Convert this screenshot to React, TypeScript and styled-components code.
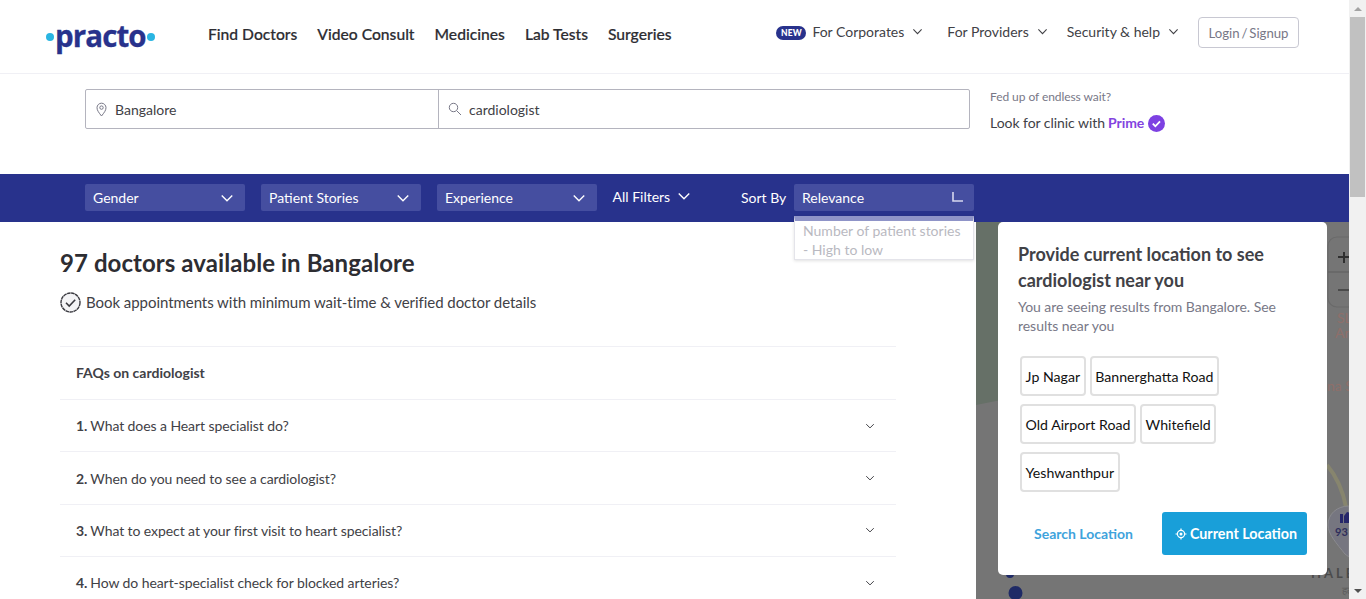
import React from "react";
import styled, { createGlobalStyle } from "styled-components";

const Global = createGlobalStyle`
  html, body { margin: 0; padding: 0; height: 599px; overflow: hidden; background: #fff; }
  body { font-family: Lato, "Liberation Sans", sans-serif; color: #414146; }
  * { box-sizing: border-box; }
`;

const Shell = styled.div`display: flex; width: 1366px; height: 599px; overflow: hidden;`;
const Page = styled.div`width: 1349px; height: 599px; display: flex; flex-direction: column; flex: none; position: relative;`;

const ScrollTrack = styled.div`width: 17px; background: #f1f1f1; display: flex; flex-direction: column; align-items: center; flex: none;`;
const ScrollArrow = styled.div`
  height: 17px; width: 17px; display: flex; align-items: center; justify-content: center;
  &::after { content: ""; border-left: 4px solid transparent; border-right: 4px solid transparent;
    ${(p: { $down?: boolean }) => p.$down ? "border-top: 4px solid #505050;" : "border-bottom: 4px solid #a3a3a3;"} }
`;
const ScrollThumb = styled.div`width: 15px; height: 180px; background: #c1c1c1; margin-bottom: auto;`;

const Header = styled.header`
  height: 74px; flex: none; border-bottom: 1px solid #f0f0f5; display: flex; align-items: center; padding: 0 50px 0 46px;
`;
const Logo = styled.div`display: flex; align-items: center; width: 162px; flex: none; height: 40px; margin-top: 1px;`;
const LogoDot = styled.span`width: 8px; height: 8px; border-radius: 50%; background: #2ab5e2; flex: none;`;
const LogoText = styled.span`
  font-family: "Open Sans", Lato, sans-serif; font-weight: 700; font-size: 29.5px; letter-spacing: -0.9px; color: #28328c;
  line-height: 32px; margin: -2px 1px 0 1px; -webkit-text-stroke: 0.3px #28328c;
`;
const MainNav = styled.nav`display: flex; gap: 20px; margin-top: -5px;`;
const MainLink = styled.span`font-size: 15.65px; font-weight: 500; color: #2d2d32; white-space: nowrap; -webkit-text-stroke: 0.2px #2d2d32;`;
const SideNav = styled.nav`display: flex; align-items: center; margin-left: auto; margin-top: -11px;`;
const Badge = styled.span`
  background: #28328c; color: #fff; font-size: 8.5px; font-weight: 900; height: 14px; width: 30px; border-radius: 8px; margin: 3px 6px 0 0;
  display: flex; align-items: center; justify-content: center; letter-spacing: 0.1px;
`;
const SideLink = styled.span<{ $mr: number }>`
  font-size: 14px; color: #414146; display: flex; align-items: center; gap: 8px; margin-right: ${(p) => p.$mr}px; white-space: nowrap;
`;
const LoginButton = styled.button`
  font-family: inherit; font-size: 13.2px; color: #787887; background: #fff; border: 1px solid #c8c8d2; border-radius: 4px; word-spacing: -1.5px;
  height: 31px; width: 101px; padding: 0; margin-top: 3px;
`;

const SearchRow = styled.section`height: 100px; flex: none; display: flex; padding: 15px 0 0 85px;`;
const SearchBox = styled.div`display: flex; width: 885px; height: 40px; border: 1px solid #b4b4be; border-radius: 2px;`;
const SearchField = styled.div<{ $w?: string }>`
  display: flex; align-items: center; gap: 7px; padding-left: 9px; font-size: 14px; color: #414146;
  ${(p) => p.$w ? `width: ${p.$w}; border-right: 1px solid #b4b4be;` : "flex: 1;"}
`;
const Prime = styled.div`margin-left: 20px; padding-top: 1px;`;
const PrimeHint = styled.div`font-size: 12px; color: #787887; line-height: 14px; letter-spacing: -.07px;`;
const PrimeLine = styled.div`font-size: 14px; color: #414146; display: flex; align-items: center; margin-top: 9px; line-height: 20px; letter-spacing: -.05px;`;
const PrimeWord = styled.span`color: #8344e0; font-weight: 700; margin-left: 3px; margin-right: 4px;`;

const FilterBar = styled.section`height: 48px; flex: none; background: #28328c; display: flex; align-items: flex-start; padding: 10px 0 0 85px;`;
const Select = styled.div<{ $w: number; $ml?: number }>`
  width: ${(p) => p.$w}px; margin-left: ${(p) => p.$ml ?? 0}px; height: 27px; background: #454ea0; border-radius: 2px; color: #fff;
  font-size: 14px; display: flex; align-items: center; justify-content: space-between; padding: 0 11px 0 8px; flex: none;
`;
const AllFilters = styled.div`color: #fff; font-size: 14px; display: flex; align-items: center; gap: 7px; margin-left: 15.5px; height: 24px; width: 128.5px;`;
const SortLabel = styled.div`color: #fff; font-size: 14px; width: 53px; height: 27px; display: flex; align-items: center; flex: none;`;
const RelevanceMark = styled.svg`margin: -2px 0 0 0;`;

const SortMenu = styled.div`
  position: absolute; left: 794px; top: 216px; width: 180px; height: 44px; background: #fff; border: 1px solid #e4e4ea;
  border-top: 5px solid #8f94c8; box-shadow: 0 1px 3px rgba(0,0,0,.12); font-size: 14px; line-height: 19px; color: #b9b9c1; padding: 0 8px; z-index: 3;
`;

const Main = styled.main`flex: 1; display: flex; min-height: 0;`;
const Listing = styled.div`width: 976px; flex: none; padding: 0 80px 0 60px; overflow: hidden;`;
const Title = styled.h1`font-size: 24px; font-weight: 700; color: #2d2d32; margin: 24px 0 0; line-height: 33px; letter-spacing: .07px;`;
const Assure = styled.div`display: flex; align-items: center; gap: 5px; font-size: 15px; color: #414146; margin-top: 11px; height: 24px; letter-spacing: -.05px;`;
const Faq = styled.div`margin-top: 32px; border-top: 1px solid #f0f0f5;`;
const FaqHead = styled.div`height: 53px; padding: 0 0 2px 16px; display: flex; align-items: center; font-size: 14px; font-weight: 700; color: #414146; border-bottom: 1px solid #f0f0f5;`;
const FaqRow = styled.div`height: 52.4px; padding: 0 21px 0 16px; display: flex; align-items: center; justify-content: space-between; font-size: 14px; color: #414146; border-bottom: 1px solid #f0f0f5; letter-spacing: -.08px;`;
const FaqNum = styled.b`font-weight: 700; margin-right: 3px;`;

const MapPanel = styled.div`flex: 1; position: relative; background: #757575; overflow: hidden;`;
const MapArt = styled.svg`position: absolute; inset: 0; display: block;`;
const Popup = styled.div`
  position: absolute; left: 22px; top: 0; width: 329px; height: 353px; background: #fff; border-radius: 5px; padding: 19px 20px;
`;
const PopTitle = styled.h2`font-size: 18px; font-weight: 700; line-height: 26px; color: #414146; margin: 0;`;
const PopText = styled.p`font-size: 14px; line-height: 19px; color: #787887; margin: 4px 0 0; letter-spacing: -.04px;`;
const Chips = styled.div`display: flex; flex-wrap: wrap; gap: 8px 4px; margin: 21px 0 0 2px; width: 260px;`;
const Chip = styled.span`
  height: 40px; border: 2px solid #e0e0e0; border-radius: 4px; padding: 0 3.6px; display: flex; align-items: center; font-size: 14.15px; color: #111; background: #fff;
`;
const PopActions = styled.div`display: flex; align-items: center; margin-top: 20px; padding-left: 16px;`;
const SearchLoc = styled.span`font-size: 14px; font-weight: 700; color: #3ea3dc; width: 128px; flex: none;`;
const CurrentLoc = styled.button`
  width: 145px; height: 43px; background: #199fd9; color: #fff; border: 0; border-radius: 3px; font-family: inherit; font-size: 14.3px; font-weight: 700;
  display: flex; align-items: center; justify-content: center; gap: 3px; padding: 0 0 0 3px;
`;

const Chevron = ({ size = 12, color = "#fff", sw = 1.2 }: { size?: number; color?: string; sw?: number }) => (
  <svg width={size} height={size} viewBox="0 0 12 12" fill="none"><path d="M1.5 3.8 6 8.3l4.5-4.5" stroke={color} strokeWidth={sw} /></svg>
);

const faqs = [
  "What does a Heart specialist do?",
  "When do you need to see a cardiologist?",
  "What to expect at your first visit to heart specialist?",
  "How do heart-specialist check for blocked arteries?",
];

const sideLinks: [string, number][] = [["For Corporates", 24], ["For Providers", 19], ["Security & help", 19]];

export default function App() {
  return (
    <Shell>
      <Global />
      <Page>
        <Header>
          <Logo>
            <LogoDot />
            <LogoText>practo</LogoText>
            <LogoDot />
          </Logo>
          <MainNav>
            {["Find Doctors", "Video Consult", "Medicines", "Lab Tests", "Surgeries"].map((t) => <MainLink key={t}>{t}</MainLink>)}
          </MainNav>
          <SideNav>
            <Badge>NEW</Badge>
            {sideLinks.map(([t, mr]) => (
              <SideLink key={t} $mr={mr}>{t}<Chevron size={11} color="#414146" /></SideLink>
            ))}
            <LoginButton>Login / Signup</LoginButton>
          </SideNav>
        </Header>

        <SearchRow>
          <SearchBox>
            <SearchField $w="353px">
              <svg width="13" height="15" viewBox="0 0 13 15" fill="none" stroke="#787887">
                <path d="M6.5 14C4 10.8 2 8.5 2 5.7a4.5 4.5 0 0 1 9 0C11 8.5 9 10.8 6.5 14Z" />
                <circle cx="6.5" cy="5.6" r="1.7" />
              </svg>
              Bangalore
            </SearchField>
            <SearchField>
              <svg width="14" height="14" viewBox="0 0 14 14" fill="none" stroke="#787887">
                <circle cx="5.5" cy="5.5" r="4.2" /><path d="m8.7 8.7 4.3 4.3" />
              </svg>
              cardiologist
            </SearchField>
          </SearchBox>
          <Prime>
            <PrimeHint>Fed up of endless wait?</PrimeHint>
            <PrimeLine>
              Look for clinic with<PrimeWord>Prime</PrimeWord>
              <svg width="17" height="17" viewBox="0 0 16 16">
                <circle cx="8" cy="8" r="8" fill="#7d41e2" />
                <path d="m4.5 8.2 2.4 2.4 4.4-4.6" fill="none" stroke="#fff" strokeWidth="1.7" />
              </svg>
            </PrimeLine>
          </Prime>
        </SearchRow>

        <FilterBar>
          <Select $w={160}>Gender<Chevron size={14} /></Select>
          <Select $w={160} $ml={16}>Patient Stories<Chevron size={14} /></Select>
          <Select $w={160} $ml={16}>Experience<Chevron size={14} /></Select>
          <AllFilters>All Filters<Chevron size={14} /></AllFilters>
          <SortLabel>Sort By</SortLabel>
          <Select $w={180}>
            Relevance
            <RelevanceMark width="11" height="10" viewBox="0 0 11 10" fill="none"><path d="M1 0v9h10" stroke="#d6d8ee" strokeWidth="1.6" /></RelevanceMark>
          </Select>
        </FilterBar>
        <SortMenu>Number of patient stories<br />- High to low</SortMenu>

        <Main>
          <Listing>
            <Title>97 doctors available in Bangalore</Title>
            <Assure>
              <svg width="21" height="21" viewBox="0 0 21 21" fill="#f4f4f6">
                <circle cx="10.5" cy="10.5" r="9.5" stroke="#3a3a40" strokeWidth="1.4" strokeDasharray="3.6 .5" />
                <path d="m6 10.8 3.2 3.2 6-6.2" fill="none" stroke="#3a3a40" strokeWidth="1.6" />
              </svg>
              Book appointments with minimum wait-time &amp; verified doctor details
            </Assure>
            <Faq>
              <FaqHead>FAQs on cardiologist</FaqHead>
              {faqs.map((q, i) => (
                <FaqRow key={q}>
                  <span><FaqNum>{i + 1}.</FaqNum>{q}</span>
                  <Chevron size={10} color="#414146" />
                </FaqRow>
              ))}
            </Faq>
          </Listing>
          <MapPanel>
            <MapArt width="373" height="377" viewBox="0 0 373 377">
              <polygon points="0,0 30,0 30,177 0,183" fill="#667067" />
              <path d="M351 243c10 12 16 26 19 42" fill="none" stroke="#87856e" strokeWidth="4" />
              <rect x="352" y="15" width="40" height="70" rx="9" fill="#757575" stroke="#6a6a6a" strokeWidth="1.2" />
              <path d="M352 50h30" stroke="#5f5f5f" />
              <path d="M362 35h11M368 30v11" stroke="#2f2f2f" strokeWidth="2" />
              <path d="M362 68h11" stroke="#4a4a4a" strokeWidth="2" />
              <g fontFamily="Lato, sans-serif" fontSize="14">
                <text x="361" y="101" fill="#8f6f6a">SL</text>
                <text x="359" y="116" fill="#8f6f6a">An</text>
                <text x="351" y="169" fill="#8f6f6a">na S</text>
              </g>
              <path d="M373 284c-12 0-21 8-21 19 0 9 9 19 17 29l4 3Z" fill="#767680" stroke="#8a8a8e" />
              <path d="M364 292h3v9h-3ZM368 301v-7l3-4 2 .5V301Z" fill="#26266a" />
              <text x="359" y="314" fontFamily="Lato, sans-serif" fontSize="11" fontWeight="700" fill="#2e2e5c">93</text>
              <text x="335" y="356" fontFamily="Lato, sans-serif" fontSize="13" fontWeight="700" letterSpacing="3" fill="#4b4b4b">HALE</text>
              <text x="366" y="372" fontFamily="'DejaVu Sans', sans-serif" fontSize="10" fill="#5c5c5c">हल</text>
              <circle cx="34" cy="352" r="4" fill="#1f2a66" />
              <circle cx="39.5" cy="371" r="7" fill="#1f2a66" />
            </MapArt>
            <Popup>
              <PopTitle>Provide current location to see cardiologist near you</PopTitle>
              <PopText>You are seeing results from Bangalore. See results near you</PopText>
              <Chips>
                {["Jp Nagar", "Bannerghatta Road", "Old Airport Road", "Whitefield", "Yeshwanthpur"].map((c) => <Chip key={c}>{c}</Chip>)}
              </Chips>
              <PopActions>
                <SearchLoc>Search Location</SearchLoc>
                <CurrentLoc>
                  <svg width="12" height="12" viewBox="0 0 12 12" fill="none" stroke="#fff" strokeWidth="1.2">
                    <circle cx="6" cy="6" r="3.6" /><circle cx="6" cy="6" r="1.5" fill="#fff" stroke="none" />
                    <path d="M6 .5v1.6M6 9.9v1.6M.5 6h1.6M9.9 6h1.6" />
                  </svg>
                  Current Location
                </CurrentLoc>
              </PopActions>
            </Popup>
          </MapPanel>
        </Main>
      </Page>
      <ScrollTrack>
        <ScrollArrow />
        <ScrollThumb />
        <ScrollArrow $down />
      </ScrollTrack>
    </Shell>
  );
}
